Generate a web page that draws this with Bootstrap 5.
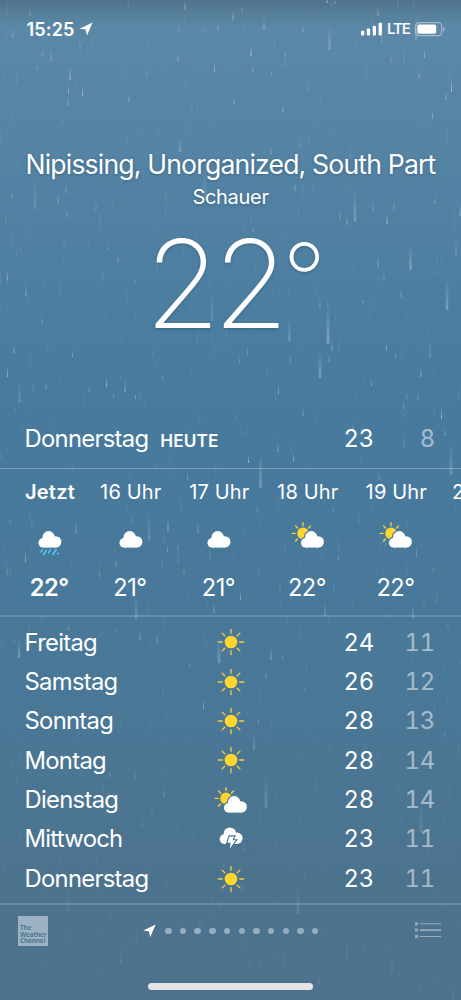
<!DOCTYPE html>
<html lang="de">
<head>
<meta charset="utf-8">
<meta name="viewport" content="width=device-width, initial-scale=1">
<title>Wetter</title>
<link href="https://cdn.jsdelivr.net/npm/bootstrap@5.3.0/dist/css/bootstrap.min.css" rel="stylesheet">
<style>
  body { font-family: Inter, "Liberation Sans", sans-serif; background: #4d728d; color: #fff; }
  .screen { width: 461px; height: 1000px; isolation: isolate;
    background: linear-gradient(#51728a 0, #56809b 14px, #5b88a7 28px, #5885a5 100px, #5081a3 220px, #477a9e 410px, #48799b 560px, #4a7796 720px, #4c738e 880px, #4d728d 1000px); }
  .rain { inset: 0; z-index: -1; }
  .statusbar { height: 58px; padding: 0 19px 0 26.4px; }
  .clock { font-size: 18px; font-weight: 600; letter-spacing: .2px; }
  .lte { font-size: 15.2px; letter-spacing: -1.2px; margin: 0 6px 0 4px; font-weight: 500; width: 22px; }
  .hero { padding-top: 89px; height: 352px; text-shadow: 0 1px 3px rgba(20,50,75,.35); }
  .city { font-size: 26.6px; line-height: 35px; letter-spacing: -.83px; white-space: nowrap; font-weight: 400; }
  .condition { font-size: 20px; line-height: 31px; letter-spacing: -.3px; }
  .now { font-size: 122px; line-height: 141px; font-weight: 200; letter-spacing: -7px; padding-left: 10px; }
  .degree { font-size: 96px; line-height: 131px; margin-left: 1px; letter-spacing: 0; }
  .day-row { font-size: 23.8px; padding: 0 26px 0 24.5px; font-variant-numeric: tabular-nums; letter-spacing: -.15px; }
  .day-name { letter-spacing: -.7px; }
  .today { height: 58px; }
  .today-tag { font-size: 17.2px; font-weight: 600; margin-left: 12px; padding-top: 3px; letter-spacing: .1px; }
  .col-day { width: 190px; }
  .hi { width: 60px; margin-left: auto; }
  .lo { width: 61px; opacity: .5; }
  .hours { height: 149px; border-top: 1px solid rgba(255,255,255,.27); border-bottom: 2px solid rgba(255,255,255,.16); padding-left: 5.5px; }
  .hour { flex: 0 0 88.5px; }
  .hour:first-child { flex-basis: 81px; padding-left: 8px; }
  .hour:first-child .hour-name, .hour:first-child .hour-temp { font-weight: 600; }
  .hour:first-child .hour-name { letter-spacing: .25px; }
  .hour-name { font-size: 20px; line-height: 46px; white-space: nowrap; letter-spacing: .15px; }
  .hour-icon { height: 44px; }
  .hour-temp { font-size: 23.6px; line-height: 49px; letter-spacing: -.5px; padding: 4px 1.6px 0 0; }
  .days { padding-top: 5.7px; height: 286px; }
  .days .day-row { height: 39.36px; }
  .row-partly svg { margin-top: 4px; }
  .bottombar { border-top: 2px solid rgba(255,255,255,.16); height: 54px; padding: 0 20px 0 18.4px; }
  .twc { width: 29.6px; height: 30px; background: #9db3c3; color: #4c7490; padding: 8px 0 0 2px; }
  .twc-text { font: 700 7.6px/6.7px "Open Sans", sans-serif; letter-spacing: -.1px; width: 34px; transform: scaleX(.83); transform-origin: 0 0; }
  .pager { gap: 8.2px; margin-left: -1.6px; }
  .dot { width: 6.5px; height: 6.5px; border-radius: 50%; background: rgba(255,255,255,.42); }
  .home { width: 165px; height: 6.4px; border-radius: 4px; background: #e5e5e5; margin-top: 26.3px; }
  svg { display: block; overflow: visible; flex: none; }
  symbol { overflow: visible; }
</style>
</head>
<body>
<svg width="0" height="0" class="position-absolute">
  <defs>
    <linearGradient id="drop" x1="0" y1="0" x2="0" y2="1">
      <stop offset="0" stop-color="#d5ebf5" stop-opacity="0"/>
      <stop offset="1" stop-color="#d5ebf5"/>
    </linearGradient>
    <g id="cloudshape">
      <circle cx="4.9" cy="11.8" r="4.8"/><circle cx="10.4" cy="6.3" r="6.2"/><circle cx="17.4" cy="10.9" r="5.7"/><path d="M4.9 8h12.5v8.6H4.9z"/>
    </g>
    <symbol id="sun" viewBox="-14 -14 28 28">
      <circle r="6.3" fill="#ffd52e"/>
      <path d="M0-8.7V-12.7M0 8.7V12.7M-8.7 0H-12.7M8.7 0H12.7M6.2-6.2L8.9-8.9M-6.2-6.2L-8.9-8.9M6.2 6.2L8.9 8.9M-6.2 6.2L-8.9 8.9" stroke="#f4d040" stroke-width="1.3" stroke-linecap="round"/>
    </symbol>
    <symbol id="cloud" viewBox="0 0 34 28">
      <use href="#cloudshape" x="5.3" y="8" fill="#fff"/>
    </symbol>
    <symbol id="shower" viewBox="0 0 34 28">
      <use href="#cloudshape" x="5.3" y="8" fill="#fff"/>
      <path d="M9.3 26.8l-1.3 2.1M13.2 27.3l-2.4 4.2M17.4 26.7l-1.8 3.2M23 26.7l-3.2 4.8M25.3 30.3l-.4.6" stroke="#56c3f5" stroke-width="1.6" stroke-linecap="round"/>
    </symbol>
    <symbol id="partly" viewBox="0 0 34 28">
      <circle cx="12" cy="10.4" r="5.8" fill="#ffd52e"/>
      <path d="M12 2.5V-.3M4.2 10.4H1.2M6.5 4.9L4.6 3M17.5 4.9L19.5 2.9M6.4 16L4.5 18" stroke="#f4d040" stroke-width="1.4" stroke-linecap="round"/>
      <use href="#cloudshape" x="9.8" y="8" fill="#fff" stroke="#497997" stroke-width="2.4"/>
      <use href="#cloudshape" x="9.8" y="8" fill="#fff"/>
    </symbol>
    <symbol id="storm" viewBox="0 0 34 28">
      <use href="#cloudshape" x="5.5" y="2.3" fill="#fff"/>
      <path d="M15.5 11.4h4.6l-1.6 3.9h3.2l-6 8.4 1.2-5.9h-3.5z" fill="#fff" stroke="#4b7592" stroke-width="2.3" stroke-linejoin="miter"/>
      <path d="M15.5 11.4h4.6l-1.6 3.9h3.2l-6 8.4 1.2-5.9h-3.5z" fill="#fff"/>
    </symbol>
  </defs>
</svg>

<main class="screen position-relative overflow-hidden">
  <svg class="rain position-absolute" id="rain" width="461" height="1000"></svg>

  <header class="statusbar d-flex align-items-center">
    <span class="clock">15:25</span>
    <svg width="14" height="14" fill="#fff" style="margin-left:4.4px"><path d="M.6 6.8L13.6.5 8 13.6 6.6 7.6z"/></svg>
    <svg class="ms-auto" width="22" height="14" fill="#fff"><rect x="0" y="8.8" width="3.3" height="4.6" rx="1"/><rect x="5.8" y="6.4" width="3.3" height="7" rx="1"/><rect x="11.7" y="3.7" width="3.3" height="9.7" rx="1"/><rect x="17.6" y=".8" width="3.3" height="12.6" rx="1"/></svg>
    <span class="lte">LTE</span>
    <svg width="27" height="14"><rect x=".7" y=".6" width="26" height="13" rx="3.6" fill="none" stroke="#fff" stroke-opacity=".45" stroke-width="1.2"/><rect x="2.4" y="2.4" width="18.8" height="9.4" rx="1.8" fill="#fff"/><path d="M28.3 5v4.4a2.4 2.4 0 0 0 0-4.4z" fill="#fff" opacity=".5"/></svg>
  </header>

  <section class="hero text-center">
    <h1 class="city m-0">Nipissing, Unorganized, South Part</h1>
    <div class="condition">Schauer</div>
    <div class="now d-flex justify-content-center align-items-start"><span>22</span><span class="degree">°</span></div>
  </section>

  <div class="day-row today d-flex align-items-center">
    <span class="day-name">Donnerstag</span><span class="today-tag">HEUTE</span>
    <span class="hi text-end">23</span><span class="lo text-end">8</span>
  </div>

  <section class="hours d-flex overflow-hidden text-center" id="hours"></section>
  <section class="days" id="days"></section>

  <footer>
    <div class="bottombar d-flex align-items-center justify-content-between">
      <div class="twc"><div class="twc-text">The<br>Weather<br>Channel</div></div>
      <div class="pager d-flex align-items-center" id="pager">
        <svg width="14" height="13" fill="#fff"><path d="M.3 5.4L12.7-.6 7.2 11.9 6 6.4z"/></svg>
      </div>
      <svg width="26" height="16" fill="#fff" opacity=".5" style="margin-top:-2px"><path d="M0 .2h3v3H0zM0 6.6h3v3H0zM0 13.1h3v3H0z" opacity=".8"/><path d="M5 1.2h21v1H5zM5 7.3h21v1.6H5zM5 14.1h21v1H5z" opacity=".85"/></svg>
    </div>
    <div class="home mx-auto"></div>
  </footer>
</main>

<script src="https://cdn.jsdelivr.net/npm/bootstrap@5.3.0/dist/js/bootstrap.bundle.min.js"></script>
<script>
  const icon = (name) => name === 'sun'
    ? '<svg width="28" height="28"><use href="#sun"/></svg>'
    : `<svg width="34" height="28"><use href="#${name}"/></svg>`;
  const hours = [['Jetzt','shower','22°'],['16 Uhr','cloud','21°'],['17 Uhr','cloud','21°'],['18 Uhr','partly','22°'],['19 Uhr','partly','22°'],['20 Uhr','partly','21°']];
  document.getElementById('hours').innerHTML = hours.map(([h, i, t]) =>
    `<div class="hour"><div class="hour-name">${h}</div><div class="hour-icon d-flex justify-content-center align-items-center">${icon(i)}</div><div class="hour-temp">${t}</div></div>`).join('');

  const days = [['Freitag','sun',24,11],['Samstag','sun',26,12],['Sonntag','sun',28,13],['Montag','sun',28,14],['Dienstag','partly',28,14],['Mittwoch','storm',23,11],['Donnerstag','sun',23,11]];
  document.getElementById('days').innerHTML = days.map(([d, i, hi, lo]) =>
    `<div class="day-row row-${i} d-flex align-items-center"><span class="col-day day-name">${d}</span><span class="d-flex justify-content-center" style="width:32px">${icon(i)}</span><span class="hi text-end">${hi}</span><span class="lo text-end">${lo}</span></div>`).join('');
  document.getElementById('pager').insertAdjacentHTML('beforeend', '<span class="dot"></span>'.repeat(11));

  // Rain: bright near drops [x, bottom, length, opacity, width], then a seeded faint layer
  const near = [[30,16,9,.3,1.3],[51,61,12,.4,1.2],[80,49,9,.4,1],[70,80,14,.6,1.1],[68.5,94,10,.55,1],[82.5,96,10,.6,1],[68,106,10,.5,1],[129,102,9,.55,1],[178,61,7,.5,1],[214.5,72,12,.55,1],[218,30,10,.4,1.2],[233,21,11,.3,1.4],[242,12,7,.4,1],[185,10,8,.45,1.3],[251,56,11,.65,1.2],[264,29,10,.5,1.2],[253,72,8,.4,1],[271.5,75,5,.4,1],[285,57,7,.35,1.2],[303,32,8,.35,1],[329.5,50,24,.3,2.6],[378,16,9,.5,1.2],[382,43,10,.4,1],[391,63,8,.3,1.3],[419,78,9,.5,1],[424.5,58,9,.5,1],[451.5,92,13,.7,1],[446,100,9,.5,1.1],[432.5,119,8,.5,1],[283,112,8,.45,1.2],[234,104,8,.45,1.2],[320,106,8,.3,1],[13,38,11,.35,1.2],[37,70,7,.3,1.2],[43,56,7,.4,1],[416,40,26,.25,2.6],[327,3,5,.6,1.6],[335,4,5,.4,1.5],
    [180,152,14,.3,2.4],[271,154,8,.5,1],[35,209,26,.22,2.4],[66,193,9,.5,1],[58,203,9,.5,1],[67,217,8,.4,1],[96,210,8,.4,1],[12,198,6,.4,1],[6,223,8,.3,1],[205,200,34,.2,2.4],[295,191,8,.5,1],[340,219,9,.5,1],[347,225,11,.5,1],[355,222,32,.3,2.4],[373,211,9,.4,1],[387,224,12,.6,1.1],[435,204,8,.5,1],[460,216,12,.5,1],[394,210,10,.3,1.2],[253,232,5,.5,1],[108,250,5,.4,1],[118,263,10,.4,1.1],[410.5,270,26,.4,2.4],[378,267,12,.3,1.5],[384,280,9,.4,1],[401,297,8,.5,1],[26,296,13,.45,1.1],[7.5,280,9,.5,1],[0,284,16,.3,1.5],[42,324,9,.4,1],[447,310,32,.35,2.6],[363,303,5,.5,1],[320,309,12,.2,2],[328,344,42,.4,2.8],[289.5,342,24,.3,2.4],[212,321,30,.2,2.4],[135,284,8,.3,1],[456,256,18,.3,1.4],
    [14,353,9,.6,1.1],[7.5,377,10,.6,1],[72.5,357,7,.5,1],[46,389,8,.45,1],[106.5,387,10,.6,1.1],[125,392,12,.55,1.1],[113.5,398,6,.4,1],[135.5,399,6,.5,1],[162.5,380,5,.4,1],[89,392,8,.3,1.1],[19.5,403,24,.22,2.5],[247.5,355,8,.4,1],[239.5,364,9,.3,1],[290.5,362,7,.4,1],[320,378,26,.35,3],[332,351,12,.5,1.1],[329,362,7,.4,1],[386.5,350,9,.5,1],[395.5,358,6,.4,1],[421,377,10,.6,1],[371.5,386,7,.5,1],[278.5,394,10,.5,1.1],[303,416,8,.5,1],[403.5,409,7,.5,1],[441.5,419,11,.65,1],[407,399,6,.4,1],[418,400,9,.4,1],[430,358,17,.2,2.4],[278,452,9,.55,1],[248.5,463,8,.7,1],[293.5,461,9,.5,1],[445,436,9,.45,1],[353,430,10,.3,1.2],[451,475,32,.3,2.6],[260.5,488,34,.35,2.6],[404,448,14,.2,1.5],[379,480,9,.4,1],[187.5,480,8,.4,1],
    [76,533,13,.45,1.2],[10,524,7,.35,1],[25.5,562,11,.6,1],[32,525,6,.4,1],[7,575,10,.4,1],[116,567,9,.5,1],[99.5,577,8,.4,1],[149,541,30,.22,2.4],[168,531,12,.6,1.1],[198,533,12,.4,1.1],[178,551,9,.4,1],[167.5,552,8,.4,1],[184,574,7,.4,1],[136,619,24,.25,2.5],[214,613,11,.5,1],[210,559,12,.25,1.2],[257,513,9,.3,1],[240.5,600,9,.5,1],[333.5,511,4,.4,1],[338.5,561,9,.35,1],[325,616,15,.3,1.5],[413,618,14,.35,1.5],[416.5,557,12,.3,1.2],[433.5,572,5,.4,1],[280,591,8,.3,1],
    [19,658,20,.35,2.2],[14,643,7,.3,1],[140,640,11,.4,1.1],[157,643,9,.5,1],[68.5,630,4,.5,1],[190,667,6,.4,1],[219,663,24,.3,3],[271,660,13,.55,1.1],[266,678,10,.4,1.1],[282.5,659,5,.4,1],[203.5,709,9,.55,1],[254,750,18,.5,1],[258.5,725,8,.35,1],[135,779,9,.3,1],[110,777,6,.4,1],[164,797,9,.3,1.2],[152,816,7,.3,1],[266,808,34,.22,3],[421,833,30,.18,2.8],[142,828,10,.2,1.3],[305,691,6,.4,1],[445,737,7,.3,1],[68,913,25,.1,2.5],[298,914,28,.14,2.8],[347,958,14,.2,1.4],[121,964,20,.12,1.8],[392,973,18,.1,2],[319,984,12,.15,1.2]];
  let seed = 20;
  const rnd = () => (seed = (seed * 16807) % 2147483647) / 2147483647;
  const drops = near.slice();
  for (let i = 0; i < 620; i++) {
    const y = rnd() * 1000;
    drops.push([rnd() * 461, y, 5 + rnd() * 12, (.04 + rnd() * .11) * (y > 650 ? .7 : 1), .8 + rnd() * 1.1]);
  }
  document.getElementById('rain').innerHTML = drops.map(([x, y, l, o, w]) =>
    `<rect x="${(x - w / 2).toFixed(1)}" y="${(y - l).toFixed(1)}" width="${w.toFixed(1)}" height="${l.toFixed(1)}" rx="${(w / 2).toFixed(1)}" fill="url(#drop)" opacity="${(o * .9).toFixed(2)}"/>`).join('');
</script>
</body>
</html>
